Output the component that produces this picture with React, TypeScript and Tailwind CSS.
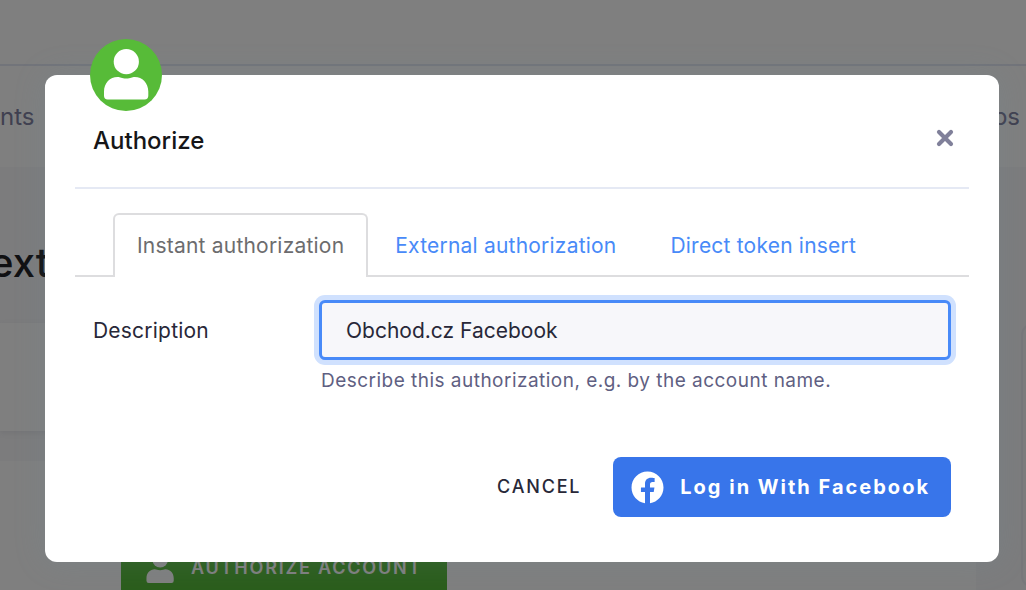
import { useState } from "react";
import { FaFacebook } from "react-icons/fa";

const tabs = ["Instant authorization", "External authorization", "Direct token insert"];

function PersonIcon({ className }: { className?: string }) {
  return (
    <svg viewBox="0 0 46 52" fill="currentColor" className={className} aria-hidden="true">
      <circle cx="23.300" cy="12.700" r="12.600" />
      <path d="M1 42.500C1 34 7 28 14.500 28C17.500 28 18.500 29.600 23.200 29.600S28.800 28 31.800 28C39.300 28 45.300 34 45.300 42.500V46.700Q45.300 50.400 41.600 50.400H4.700Q1 50.400 1 46.700Z" />
    </svg>
  );
}

function Backdrop() {
  return (
    <div className="flex min-h-screen flex-col bg-[#f8f8fa]" aria-hidden="true">
      <div className="h-[66px] border-b-2 border-[#e4e9f4] bg-white" />
      <div className="flex h-[101px] items-center justify-between bg-white pr-1.5 text-2xl text-[#8080a0]">
        <span>nts</span>
        <span>ps</span>
      </div>
      <p className="-ml-2.5 pt-[72px] text-[40px] leading-[48px] font-medium text-[#202024]">ext</p>
      <div className="mt-9 flex flex-1">
        <div className="flex flex-1 flex-col gap-[30px]">
          <div className="h-[108px] bg-white shadow-[0_2px_6px_rgba(80,80,110,0.1)]" />
          <div className="flex-1 bg-white pl-[121px] pt-[67px]">
            <div className="flex h-[62px] w-[326px] items-center gap-4 bg-[#57bb38] pt-[18px] pl-6 text-lg font-semibold tracking-widest text-white">
              <PersonIcon className="h-8 w-[30px]" />
              <span>AUTHORIZE ACCOUNT</span>
            </div>
          </div>
        </div>
        <div className="w-[50px] overflow-hidden pl-[45px]">
          <div className="h-[265px] w-16 rounded-xl border-2 border-[#eeeef5]" />
        </div>
      </div>
    </div>
  );
}

function Dialog() {
  const [active, setActive] = useState(0);
  const [description, setDescription] = useState("Obchod.cz Facebook");

  return (
    <div
      role="dialog"
      aria-labelledby="dialog-title"
      className="relative w-full rounded-xl bg-white px-[30px] pb-[45px] shadow-[0_0_32px_rgba(110,145,160,0.2)]"
    >
      <div className="absolute -top-9 left-[45px] flex size-[72px] items-center justify-center rounded-full bg-[#57bb38] text-white">
        <PersonIcon className="h-[52px] w-[46px]" />
      </div>
      <header className="flex items-center justify-between border-b-2 border-[#e5e9f4] pt-12 pr-3 pb-7 pl-[18px]">
        <h1 id="dialog-title" className="text-2xl leading-9 font-medium text-[#161618]">
          Authorize
        </h1>
        <button type="button" aria-label="Close" className="-mt-1.5 flex size-6 items-center justify-center text-[#80809a]">
          <svg viewBox="0 0 20 20" className="size-5" fill="none" stroke="currentColor" strokeWidth="4.200" strokeLinecap="round" aria-hidden="true">
            <path d="M4 4L16 16M16 4L4 16" />
          </svg>
        </button>
      </header>
      <div role="tablist" className="mt-6 flex border-b-2 border-[#dddddf] pl-[38px] text-[21px]">
        {tabs.map((tab, i) => (
          <button
            key={tab}
            type="button"
            role="tab"
            aria-selected={active === i}
            onClick={() => setActive(i)}
            className={
              active === i
                ? "-mb-0.5 h-16 rounded-t-md border-2 border-b-0 border-[#dddddf] bg-white px-[22px] tracking-[0.01em] text-[#6c6c6e]"
                : "-mb-0.5 h-16 border-2 border-b-0 border-transparent px-[25px] tracking-[0.01em] text-[#488af8]"
            }
          >
            {tab}
          </button>
        ))}
      </div>
      <form onSubmit={(e) => e.preventDefault()} className="px-[18px] pt-[23px]">
        <div className="flex items-start">
          <label htmlFor="description" className="w-[226px] shrink-0 text-[21px] leading-[62px] tracking-[0.01em] text-[#282838]">
            Description
          </label>
          <div className="min-w-0 flex-1">
            <input
              id="description"
              type="text"
              value={description}
              onChange={(e) => setDescription(e.target.value)}
              aria-describedby="description-hint"
              className="h-[60px] w-full rounded-md border-3 border-[#488af8] bg-[#f7f7fa] px-6 text-[21px] text-[#282838] ring-[5px] ring-[#d0e1fe] outline-none"
            />
            <p id="description-hint" className="mt-[9px] pl-0.5 text-[19px] leading-6 tracking-wide text-[#5f5f82]">
              Describe this authorization, e.g. by the account name.
            </p>
          </div>
        </div>
        <div className="mt-16 flex items-center justify-end gap-8">
          <button type="button" className="text-lg font-medium tracking-widest text-[#282838]">
            CANCEL
          </button>
          <button
            type="submit"
            className="flex h-[60px] items-center gap-4 rounded-lg bg-[#3875ea] pr-[21px] pl-[18px] text-xl font-bold tracking-widest text-white"
          >
            <FaFacebook className="size-[33px]" aria-hidden="true" />
            Log in With Facebook
          </button>
        </div>
      </form>
    </div>
  );
}

export default function App() {
  return (
    <div className="relative h-screen overflow-hidden font-['Inter',sans-serif]">
      <Backdrop />
      <div className="absolute inset-0 flex items-start bg-black/50 pt-[75px] pr-[27px] pl-[45px]">
        <Dialog />
      </div>
    </div>
  );
}
